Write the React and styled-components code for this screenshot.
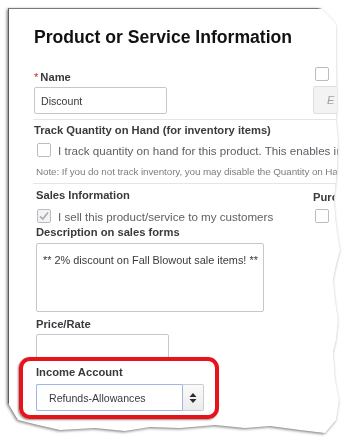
import React from "react";
import styled, { createGlobalStyle } from "styled-components";

const Global = createGlobalStyle`
  html, body { margin: 0; padding: 0; background: #fff; }
  body { font-family: "Liberation Sans", Arial, sans-serif; width: 350px; height: 443px; overflow: hidden; }
`;

const Shadow = styled.div`
  padding: 8px 0 0 8px;
  filter: drop-shadow(-1px 1px 1.5px rgba(0, 0, 0, 0.55));
`;

const Paper = styled.div`
  box-sizing: border-box;
  width: 334px;
  height: 428px;
  background: #fff;
  border-left: 1px solid #5e5e5e;
  border-top: 1px solid #7a7a7a;
  padding: 17px 0 0 25px;
  overflow: hidden;
  clip-path: polygon(
    0 0, 310px 0, 314px 1px, 328px 16px, 328px 52px, 329px 92px, 328px 112px,
    330px 132px, 329px 162px, 326px 192px, 328px 217px, 332px 242px, 328px 257px,
    325px 272px, 327px 292px, 330px 312px, 328px 332px, 325px 344px, 327px 372px,
    331px 392px, 328px 412px, 317px 425px, 292px 422px, 262px 418px, 237px 420px,
    207px 417px, 172px 420px, 142px 419px, 117px 423px, 87px 420px, 52px 422px,
    30px 417px, 10px 412px, 4px 402px, 0 395px
  );
`;

const Content = styled.div`
  width: 420px;
  display: flex;
  flex-direction: column;
  color: #393a3d;
`;

const Title = styled.h1`
  margin: 0;
  font-size: 17.6px;
  line-height: 22px;
  font-weight: 700;
  color: #111;
`;

const TopRow = styled.div`
  display: grid;
  grid-template-columns: 279px auto;
  margin-top: 18px;
`;

const Col = styled.div`
  display: flex;
  flex-direction: column;
  align-items: flex-start;
`;

const Label = styled.div`
  font-size: 11.2px;
  line-height: 14px;
  font-weight: 700;
  color: #393a3d;
  margin-top: ${(p) => p.$mt || 0}px;
  white-space: nowrap;
`;

const Req = styled.span`
  color: #d52b1e;
  font-weight: 400;
  margin-right: 2px;
`;

const Input = styled.div`
  box-sizing: border-box;
  width: ${(p) => p.$w}px;
  height: ${(p) => p.$h || 27}px;
  margin-top: ${(p) => p.$mt || 0}px;
  border: 1px solid #c4c7cc;
  border-radius: 2px;
  background: #fff;
  font-size: 10.6px;
  color: #393a3d;
  padding: 6px 6px;
  line-height: 14px;
`;

const Box = styled.div`
  box-sizing: border-box;
  width: 14px;
  height: 14px;
  flex: 0 0 14px;
  border: 1px solid #b9bcc2;
  border-radius: 2px;
  background: ${(p) => (p.$checked ? "#f3f3f3" : "#fff")};
  margin-top: ${(p) => p.$mt || 0}px;
  margin-left: ${(p) => p.$ml || 0}px;
  display: flex;
  align-items: center;
  justify-content: center;
`;

const GhostButton = styled.div`
  box-sizing: border-box;
  width: 60px;
  height: 28px;
  margin-top: 5px;
  background: #f3f3f3;
  border: 1px solid #dedede;
  border-radius: 2px;
  font-style: italic;
  font-size: 11px;
  color: #a0a0a0;
  padding: 7px 0 0 13px;
`;

const Divider = styled.div`
  height: 1px;
  margin-top: ${(p) => p.$mt}px;
  margin-left: -1px;
  background: #e4e5e7;
`;

const CheckRow = styled.div`
  display: flex;
  align-items: center;
  gap: 7px;
  margin-top: ${(p) => p.$mt}px;
  margin-left: ${(p) => p.$ml || 0}px;
  height: 14px;
`;

const CheckText = styled.span`
  font-size: 11.6px;
  line-height: 16px;
  color: #5f6066;
  white-space: nowrap;
  padding-top: 1px;
`;

const Note = styled.div`
  font-size: 9.9px;
  line-height: 12px;
  color: #7d7e83;
  margin-top: 9px;
  margin-left: 2px;
  white-space: nowrap;
  letter-spacing: -0.1px;
`;

const Section = styled.div`
  padding-left: 2px;
  display: flex;
  flex-direction: column;
`;

const SalesRow = styled.div`
  display: grid;
  grid-template-columns: 277px auto;
  margin-top: 4px;
`;

const TextArea = styled.div`
  box-sizing: border-box;
  width: 228px;
  height: 69px;
  margin-top: 4px;
  border: 1px solid #c4c7cc;
  border-radius: 2px;
  padding: 9px 6px;
  font-size: 10.9px;
  line-height: 14px;
  color: #393a3d;
  white-space: nowrap;
`;

const Highlight = styled.div`
  position: relative;
  display: flex;
  flex-direction: column;
  margin-top: 5px;
  &::before {
    content: "";
    position: absolute;
    left: -17px;
    top: -8px;
    width: 200px;
    height: 62px;
    box-sizing: border-box;
    border: 4px solid #e8121a;
    border-radius: 11px;
    box-shadow: -1px 1px 2px rgba(0, 0, 0, 0.45);
    pointer-events: none;
    z-index: 2;
  }
`;

const SelectWrap = styled.div`
  display: flex;
  margin-top: 5px;
  height: 27px;
`;

const SelectField = styled.div`
  box-sizing: border-box;
  width: 146px;
  height: 27px;
  border: 1px solid #9fb6e3;
  border-right: none;
  border-radius: 2px 0 0 2px;
  padding: 6px 0 0 12px;
  font-size: 10.6px;
  line-height: 14px;
  color: #393a3d;
  white-space: nowrap;
`;

const SelectBtn = styled.div`
  box-sizing: border-box;
  width: 22px;
  height: 27px;
  border: 1px solid #c9ccd1;
  border-left-color: #9fb6e3;
  border-radius: 0 2px 2px 0;
  background: linear-gradient(#fafafa, #ececec);
  display: flex;
  align-items: center;
  justify-content: center;
`;

const Check = () => (
  <svg width="12" height="12" viewBox="0 0 12 12">
    <path d="M2 6.3 L4.8 9 L10 2.6" fill="none" stroke="#a9abaf" strokeWidth="1.6" />
  </svg>
);

const Arrows = () => (
  <svg width="8" height="12" viewBox="0 0 8 12">
    <path d="M4 1 L7.5 5 L0.5 5 Z" fill="#2b2d30" />
    <path d="M4 11 L7.5 7 L0.5 7 Z" fill="#2b2d30" />
  </svg>
);

export default function App() {
  return (
    <>
      <Global />
      <Shadow>
        <Paper>
          <Content>
            <Title>Product or Service Information</Title>
            <TopRow>
              <Col>
                <Label $mt={4}>
                  <Req>*</Req>Name
                </Label>
                <Input $w={133} $mt={3}>Discount</Input>
              </Col>
              <Col>
                <Box $mt={1} $ml={2} />
                <GhostButton>E</GhostButton>
              </Col>
            </TopRow>
            <Divider $mt={5} />
            <Label $mt={3}>Track Quantity on Hand (for inventory items)</Label>
            <CheckRow $mt={6} $ml={3}>
              <Box />
              <CheckText>I track quantity on hand for this product. This enables inventory tracking</CheckText>
            </CheckRow>
            <Note>Note: If you do not track inventory, you may disable the Quantity on Hand feature</Note>
            <Divider $mt={5} />
            <Section>
              <SalesRow>
                <Col>
                  <Label>Sales Information</Label>
                  <CheckRow $mt={7} $ml={1}>
                    <Box $checked>
                      <Check />
                    </Box>
                    <CheckText>I sell this product/service to my customers</CheckText>
                  </CheckRow>
                </Col>
                <Col>
                  <Label $mt={2}>Purchasing</Label>
                  <Box $mt={5} $ml={2} />
                </Col>
              </SalesRow>
              <Label $mt={2}>Description on sales forms</Label>
              <TextArea>** 2% discount on Fall Blowout sale items! **</TextArea>
              <Label $mt={5}>Price/Rate</Label>
              <Input $w={133} $h={26} $mt={3} />
              <Highlight>
                <Label>Income Account</Label>
                <SelectWrap>
                  <SelectField>Refunds-Allowances</SelectField>
                  <SelectBtn>
                    <Arrows />
                  </SelectBtn>
                </SelectWrap>
              </Highlight>
            </Section>
          </Content>
        </Paper>
      </Shadow>
    </>
  );
}
